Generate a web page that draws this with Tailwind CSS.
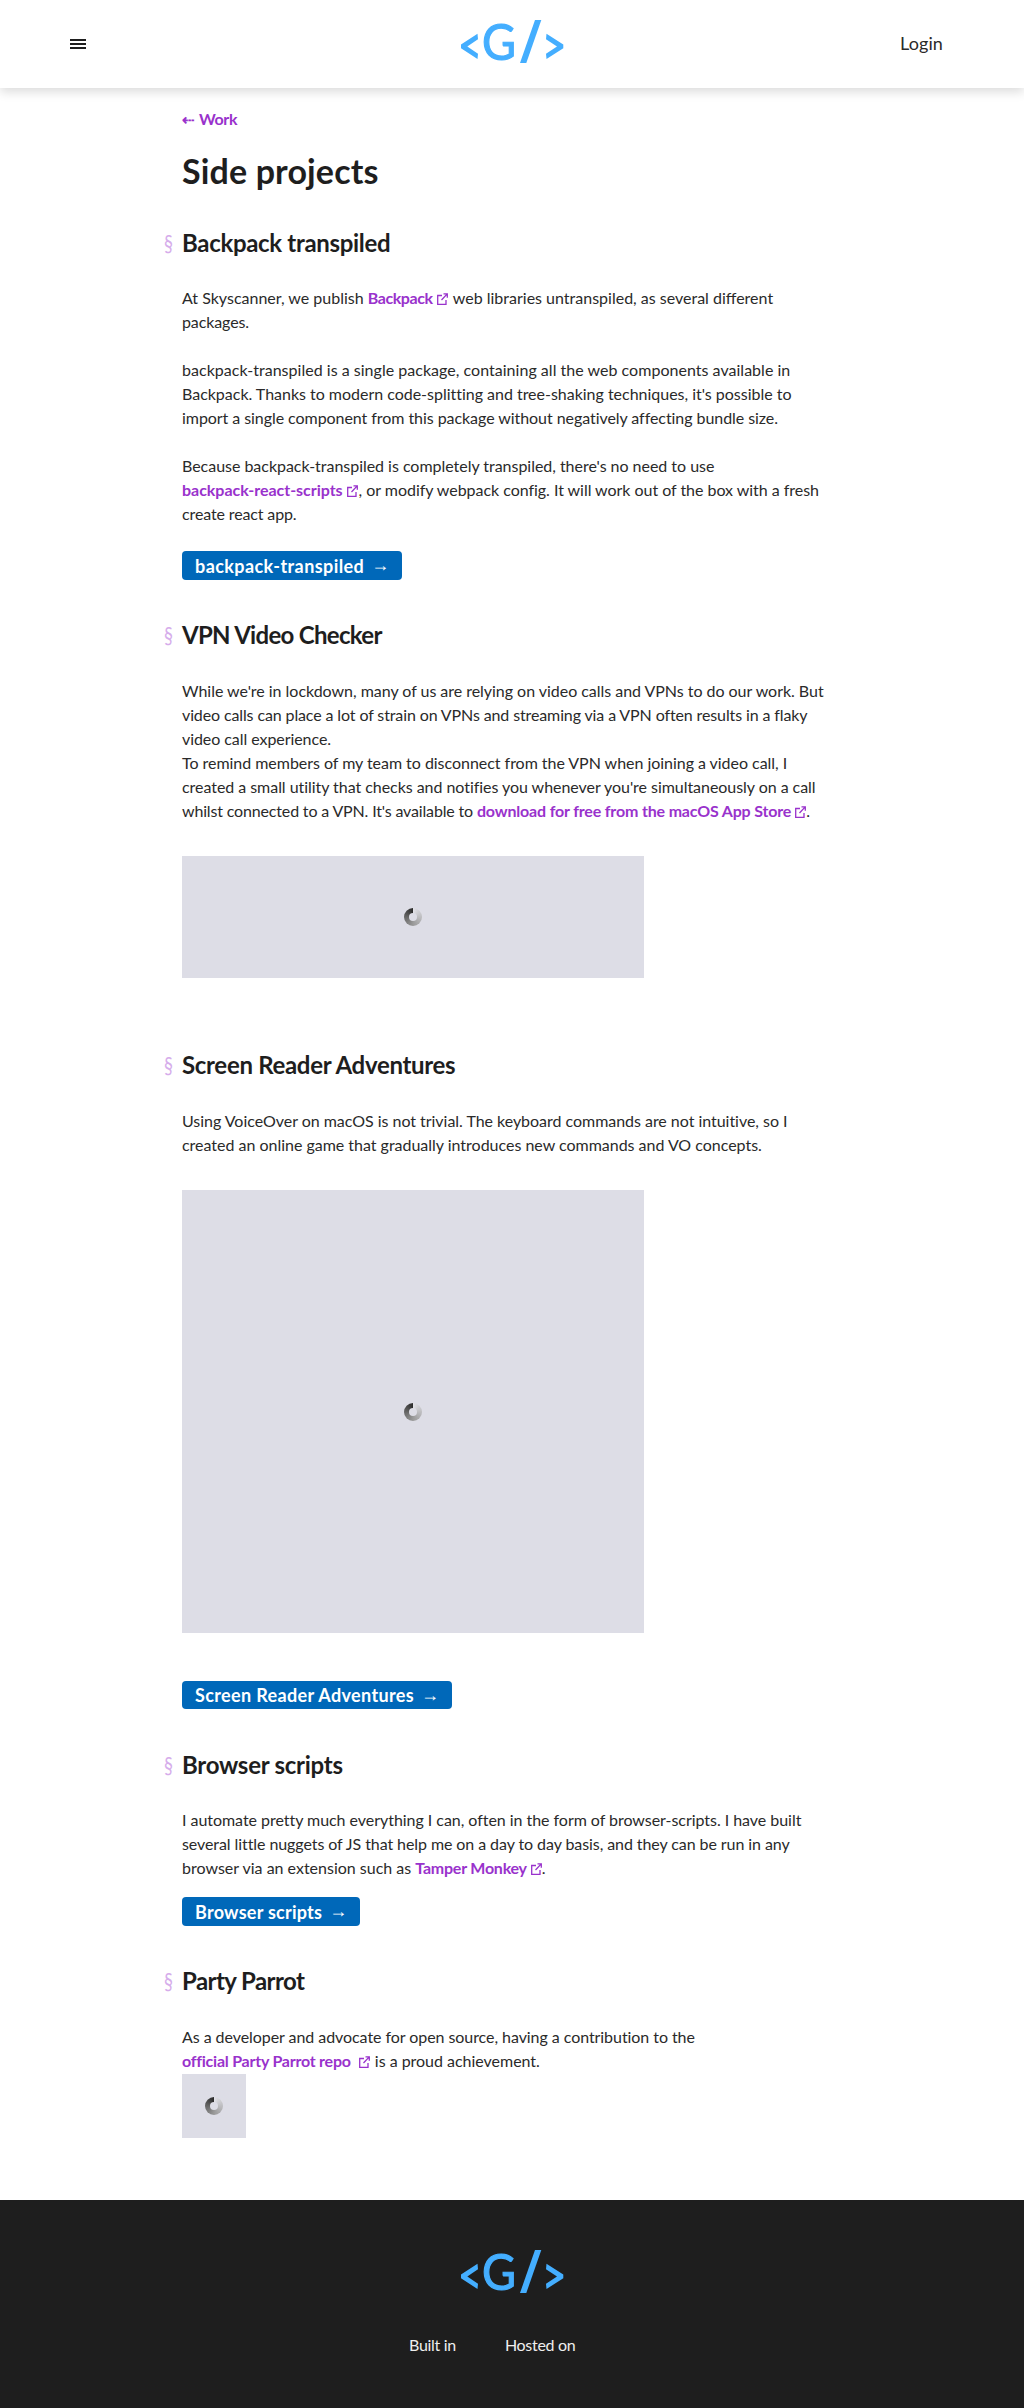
<!DOCTYPE html>
<html lang="en">
<head>
<meta charset="utf-8">
<title>Side projects</title>
<script src="https://cdn.jsdelivr.net/npm/@tailwindcss/browser@4"></script>
</head>
<body class="bg-white font-['Lato','Open_Sans',sans-serif] text-base/6 text-[#2a2a2a]">
<svg class="hidden">
  <symbol id="logo" viewBox="0 0 124 60">
    <g fill="#44aeff">
      <path d="M11 34.5 27.5 23.7 28 29.3 17.3 36.5 28 43.7 27.5 49 11 38.3Z"/>
      <text x="32" y="49.7" font-family="Lato" font-size="51" font-weight="400" stroke="#44aeff" stroke-width="1.2" textLength="34" lengthAdjust="spacingAndGlyphs">G</text>
      <path d="M85 10H91.3L76.3 53H70Z"/>
      <path d="M96.5 23.7 113.3 34.5V38.3L96.5 49 96 43.7 107 36.5 96 29.3Z"/>
    </g>
  </symbol>
  <symbol id="ext" viewBox="0 0 11 12">
    <path d="M5 2.5H.7V11.3H9V7M6.5.8H10.3V4.7M10 1.1 4.5 7" fill="none" stroke="#9932cc" stroke-width="1.3"/>
  </symbol>
</svg>

<header class="flex h-[88px] items-start bg-white shadow-[0_4px_10px_rgba(0,0,0,0.14)]">
  <button class="mt-[39px] ml-[70px] flex w-4 flex-col gap-0.5" aria-label="Menu">
    <span class="h-0.5 w-4 bg-[#1e1e1e]"></span><span class="h-0.5 w-4 bg-[#1e1e1e]"></span><span class="h-0.5 w-4 bg-[#1e1e1e]"></span>
  </button>
  <svg class="mt-2.5 ml-[364px] h-[60px] w-[124px]"><use href="#logo"/></svg>
  <a class="mt-[31px] ml-[326px] text-lg/6 tracking-[0.1px]">Login</a>
</header>

<main class="ml-[182px] w-[660px] pt-[19px] whitespace-nowrap">
  <a class="block font-bold text-[#9932cc]"><span class="inline-block w-[17px] text-[15px]">⇠</span><span class="tracking-[-0.34px]">Work</span></a>
  <h1 class="mt-[18px] text-[34px]/[44px] font-bold tracking-[0.14px] text-[#1e1e1e]">Side projects</h1>

  <section class="mt-[34px]">
    <h2 class="-ml-[18px] flex text-2xl/8 font-bold tracking-[-0.32px] text-[#1e1e1e]"><span class="w-[18px] origin-left scale-x-75 font-normal text-[#d6adeb]">§</span>Backpack transpiled</h2>
    <p class="mt-[27px]">At Skyscanner, we publish <a class="font-bold tracking-[-0.44px] text-[#9932cc]">Backpack</a><svg class="mr-[1.5px] ml-1 inline h-3 w-[11px] align-[-1px]"><use href="#ext"/></svg> web libraries untranspiled, as several different<br><span class="tracking-[-0.11px]">packages.</span></p>
    <p class="mt-6">
      <span class="block tracking-[0.025px]">backpack-transpiled is a single package, containing all the web components available in</span>
      <span class="block tracking-[-0.016px]">Backpack. Thanks to modern code-splitting and tree-shaking techniques, it's possible to</span>
      <span class="block tracking-[-0.06px]">import a single component from this package without negatively affecting bundle size.</span>
    </p>
    <p class="mt-6">
      <span class="block tracking-[-0.029px]">Because backpack-transpiled is completely transpiled, there's no need to use</span>
      <span class="block tracking-[-0.035px]"><a class="font-bold text-[#9932cc]">backpack-react-scripts</a><svg class="mr-px ml-1 inline h-3 w-[11px] align-[-1px]"><use href="#ext"/></svg>, or modify webpack config. It will work out of the box with a fresh</span>
      <span class="block tracking-[-0.13px]">create react app.</span>
    </p>
    <a class="mt-[25px] flex h-[29px] w-[220px] items-center rounded bg-[#0068b9] pl-[13px] text-lg/7 font-bold tracking-[0.42px] text-white">backpack-transpiled<span class="ml-[7px] pb-[3px] font-['Open_Sans'] font-normal">→</span></a>
  </section>

  <section class="mt-[39px]">
    <h2 class="-ml-[18px] flex text-2xl/8 font-bold tracking-[-0.7px] text-[#1e1e1e]"><span class="w-[18px] origin-left scale-x-75 font-normal text-[#d6adeb]">§</span>VPN Video Checker</h2>
    <p class="mt-7">
      <span class="block tracking-[-0.03px]">While we're in lockdown, many of us are relying on video calls and VPNs to do our work. But</span>
      <span class="block tracking-[-0.12px]">video calls can place a lot of strain on VPNs and streaming via a VPN often results in a flaky</span>
      <span class="block tracking-[-0.064px]">video call experience.</span>
      <span class="block tracking-[-0.035px]">To remind members of my team to disconnect from the VPN when joining a video call, I</span>
      <span class="block tracking-[-0.045px]">created a small utility that checks and notifies you whenever you're simultaneously on a call</span>
      <span class="block tracking-[-0.16px]">whilst connected to a VPN. It's available to <a class="font-bold tracking-[-0.17px] text-[#9932cc]">download for free from the macOS App Store</a><svg class="ml-1 inline h-3 w-[11px] align-[-1px]"><use href="#ext"/></svg>.</span>
    </p>
    <div class="mt-[33px] flex h-[122px] w-[462px] items-center justify-center bg-[#dddde6]">
      <div class="flex size-[18px] items-center justify-center rounded-full bg-[conic-gradient(#e2e2e8,#999_50%,#666_75%,#2a2a2a)]"><span class="size-2 rounded-full bg-[#dddde6]"></span></div>
    </div>
  </section>

  <section class="mt-[71px]">
    <h2 class="-ml-[18px] flex text-2xl/8 font-bold tracking-[-0.31px] text-[#1e1e1e]"><span class="w-[18px] origin-left scale-x-75 font-normal text-[#d6adeb]">§</span>Screen Reader Adventures</h2>
    <p class="mt-7">
      <span class="block tracking-[-0.03px]">Using VoiceOver on macOS is not trivial. The keyboard commands are not intuitive, so I</span>
      <span class="block tracking-[-0.015px]">created an online game that gradually introduces new commands and VO concepts.</span>
    </p>
    <div class="mt-[33px] flex h-[443px] w-[462px] items-center justify-center bg-[#dddde6]">
      <div class="flex size-[18px] items-center justify-center rounded-full bg-[conic-gradient(#e2e2e8,#999_50%,#666_75%,#2a2a2a)]"><span class="size-2 rounded-full bg-[#dddde6]"></span></div>
    </div>
    <a class="mt-12 flex h-7 w-[270px] items-center rounded bg-[#0068b9] pl-[13px] text-lg/7 font-bold tracking-[0.35px] text-white">Screen Reader Adventures<span class="ml-[7px] pb-[3px] font-['Open_Sans'] font-normal">→</span></a>
  </section>

  <section class="mt-10">
    <h2 class="-ml-[18px] flex text-2xl/8 font-bold tracking-[-0.26px] text-[#1e1e1e]"><span class="w-[18px] origin-left scale-x-75 font-normal text-[#d6adeb]">§</span>Browser scripts</h2>
    <p class="mt-[27px]">
      <span class="block tracking-[-0.04px]">I automate pretty much everything I can, often in the form of browser-scripts. I have built</span>
      <span class="block tracking-[-0.08px]">several little nuggets of JS that help me on a day to day basis, and they can be run in any</span>
      <span class="block">browser via an extension such as <a class="font-bold tracking-[-0.23px] text-[#9932cc]">Tamper Monkey</a><svg class="ml-1 inline h-3 w-[11px] align-[-1px]"><use href="#ext"/></svg>.</span>
    </p>
    <a class="mt-[17px] flex h-[29px] w-[178px] items-center rounded bg-[#0068b9] pl-[13px] text-lg/7 font-bold tracking-[0.25px] text-white">Browser scripts<span class="ml-[7px] pb-[3px] font-['Open_Sans'] font-normal">→</span></a>
  </section>

  <section class="mt-[39px]">
    <h2 class="-ml-[18px] flex text-2xl/8 font-bold tracking-[-0.57px] text-[#1e1e1e]"><span class="w-[18px] origin-left scale-x-75 font-normal text-[#d6adeb]">§</span>Party Parrot</h2>
    <p class="mt-7">
      <span class="block tracking-[-0.06px]">As a developer and advocate for open source, having a contribution to the</span>
      <span class="block tracking-[-0.02px]"><a class="font-bold tracking-[-0.234px] text-[#9932cc]">official Party Parrot repo</a><svg class="mr-px ml-2 inline h-3 w-[11px] align-[-1px]"><use href="#ext"/></svg> is a proud achievement.</span>
    </p>
    <div class="mt-px flex size-16 items-center justify-center bg-[#dddde6]">
      <div class="flex size-[18px] items-center justify-center rounded-full bg-[conic-gradient(#e2e2e8,#999_50%,#666_75%,#2a2a2a)]"><span class="size-2 rounded-full bg-[#dddde6]"></span></div>
    </div>
  </section>
</main>

<footer class="mt-[62px] h-[208px] bg-[#1e1e1e] pt-10 text-[#eee]">
  <svg class="ml-[450px] h-[60px] w-[124px]"><use href="#logo"/></svg>
  <div class="mt-[33px] ml-[409px] flex gap-[49px]"><span class="tracking-[-0.3px]">Built in</span><span class="tracking-[-0.3px]">Hosted on</span></div>
</footer>
</body>
</html>
